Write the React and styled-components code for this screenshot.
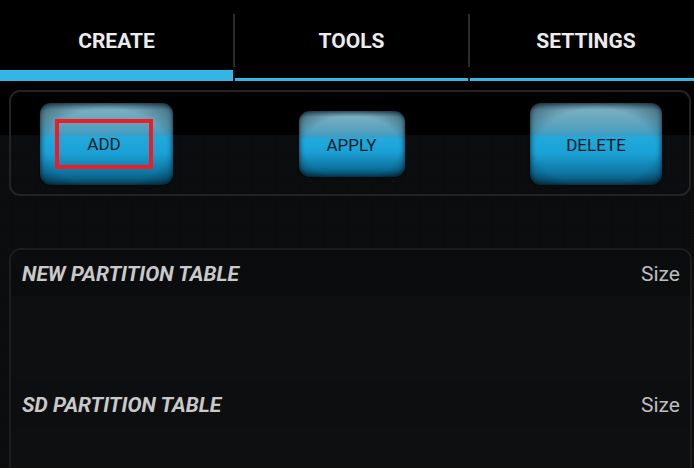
import React from "react";
import styled, { createGlobalStyle } from "styled-components";

const GlobalStyle = createGlobalStyle`
  html, body {
    margin: 0;
    padding: 0;
    width: 694px;
    height: 468px;
    overflow: hidden;
    font-family: Roboto, "Liberation Sans", sans-serif;
    background:
      linear-gradient(180deg, #000 0, #000 135px, transparent 135px),
      repeating-conic-gradient(#0a0b0c 0% 25%, #0d0e0f 0% 50%) 0 0 / 3px 3px;
  }
`;

const Page = styled.div`
  display: flex;
  flex-direction: column;
`;

const TabBar = styled.div`
  display: flex;
  height: 81px;
`;

const Tab = styled.div`
  position: relative;
  flex: ${(p) => (p.w ? `0 0 ${p.w}px` : "1")};
  box-sizing: border-box;
  display: flex;
  justify-content: center;
  padding: 29px 0 0 ${(p) => (p.last ? "8px" : "0")};
  border-bottom: ${(p) => (p.active ? "11px" : "3px")} solid #33b5e5;
  margin-right: ${(p) => (p.last ? "0" : "2px")};

  &::after {
    content: "";
    display: ${(p) => (p.last ? "none" : "block")};
    position: absolute;
    right: -2px;
    top: 14px;
    height: 53px;
    width: 2px;
    background: #2b2b2b;
  }
`;

const TabLabel = styled.span`
  font-size: 21px;
  font-weight: 700;
  line-height: 24px;
  color: #ececec;
`;

const ButtonPanel = styled.div`
  margin: 9px 3px 0 9px;
  height: 106px;
  box-sizing: border-box;
  border: 2px solid #222325;
  border-radius: 11px;
  display: flex;
  align-items: center;
  justify-content: space-between;
  padding: 2px 27px 0 29px;
`;

const GlossButton = styled.div`
  width: ${(p) => p.w}px;
  height: ${(p) => p.h}px;
  box-sizing: border-box;
  padding-top: 1px;
  border-radius: 11px;
  display: flex;
  align-items: center;
  justify-content: center;
  color: #0b1a22;
  font-size: 17px;
  background:
    radial-gradient(ellipse 75% 80% at 50% 55%, transparent 60%, rgba(0, 25, 40, 0.6) 100%),
    linear-gradient(
      180deg,
      #4f8193 0%,
      #78aec0 9%,
      #5aa2bd 28%,
      #3c9dc4 39%,
      #21aadd 42%,
      #1aa0d4 62%,
      #0e76a3 85%,
      #064865 100%
    );
  box-shadow: inset 0 0 5px rgba(0, 0, 0, 0.75), 0 0 3px rgba(0, 0, 0, 0.9);
`;

const Highlight = styled.div`
  width: 98px;
  height: 50px;
  box-sizing: border-box;
  border: 4px solid #ec1d27;
  margin: -2px 5px 0 0;
  display: flex;
  align-items: center;
  justify-content: center;
`;

const TablePanel = styled.div`
  margin: 52px 2px 0 9px;
  height: 240px;
  box-sizing: border-box;
  border: 2px solid #1c1d20;
  border-radius: 12px;
  background: #0d0e10;
  overflow: hidden;
  display: flex;
  flex-direction: column;
`;

const SectionHeader = styled.div`
  display: flex;
  justify-content: space-between;
  align-items: flex-start;
  height: ${(p) => p.h}px;
  padding: 12px 10px 0 11px;
  box-sizing: border-box;
  background: ${(p) => p.bg};
`;

const SectionTitle = styled.span`
  font-size: 21px;
  font-weight: 700;
  font-style: italic;
  line-height: 24px;
  color: #c9c9c9;
`;

const SizeLabel = styled.span`
  font-size: 21px;
  line-height: 24px;
  color: #bdbdbd;
`;

const SectionBody = styled.div`
  height: ${(p) => p.h}px;
  background: #0e0f11;
`;

export default function App() {
  const tabs = [
    { label: "CREATE", w: 233 },
    { label: "TOOLS", w: 233 },
    { label: "SETTINGS" },
  ];
  return (
    <Page>
      <GlobalStyle />
      <TabBar>
        {tabs.map((t, i) => (
          <Tab key={t.label} w={t.w} active={i === 0} last={i === tabs.length - 1}>
            <TabLabel>{t.label}</TabLabel>
          </Tab>
        ))}
      </TabBar>
      <ButtonPanel>
        <GlossButton w={133} h={82}>
          <Highlight>ADD</Highlight>
        </GlossButton>
        <GlossButton w={106} h={66}>APPLY</GlossButton>
        <GlossButton w={132} h={82}>DELETE</GlossButton>
      </ButtonPanel>
      <TablePanel>
        <SectionHeader h={46} bg="#0b0c0e">
          <SectionTitle>NEW PARTITION TABLE</SectionTitle>
          <SizeLabel>Size</SizeLabel>
        </SectionHeader>
        <SectionBody h={86} />
        <SectionHeader h={46} bg="#0d0e10">
          <SectionTitle>SD PARTITION TABLE</SectionTitle>
          <SizeLabel>Size</SizeLabel>
        </SectionHeader>
        <SectionBody h={60} />
      </TablePanel>
    </Page>
  );
}
